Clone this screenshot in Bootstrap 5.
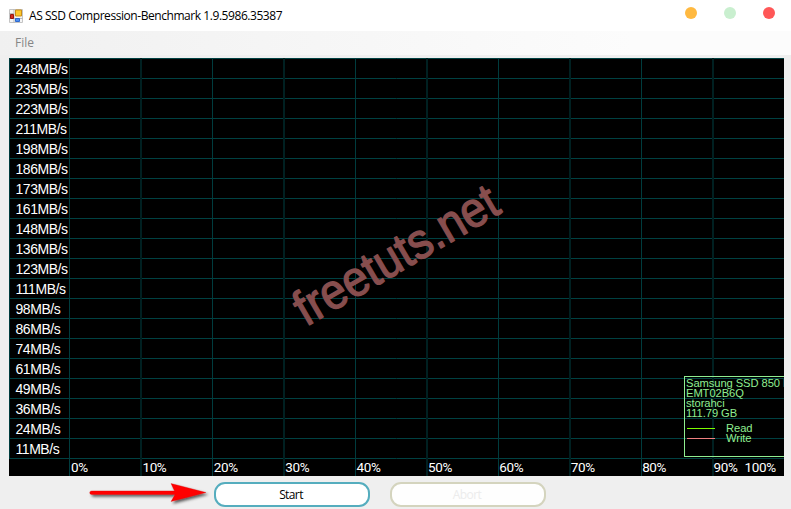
<!DOCTYPE html>
<html lang="en">
<head>
<meta charset="utf-8">
<title>AS SSD Compression-Benchmark</title>
<link rel="stylesheet" href="https://cdn.jsdelivr.net/npm/bootstrap@5.3.0/dist/css/bootstrap.min.css">
<style>
body{width:791px;height:509px;background:#efefef;font-family:"Open Sans","Noto Sans",sans-serif;font-size:12px;line-height:16px;color:#000}
.titlebar{height:31px;padding:0 16px 0 9px}
.titletext{margin-left:6px;letter-spacing:-.44px}
.dots{gap:27px;margin-top:-5px}
.dot{width:12px;height:12px}
.dot-min{background:#ffb940}.dot-max{background:#c9efcf}.dot-close{background:#ff5757}
.menubar{height:24px;background:linear-gradient(90deg,#f0f0f0,#fcfcfc 80%);color:#868686;padding-left:15px}
.plot{width:775px;height:418px;margin:3px 0 0 9px;background:#000}
.gridlines{inset:0}
.ylabels{padding:1px 0 0 6.5px;font:14px/20px "Liberation Sans",sans-serif;letter-spacing:-.45px;color:#fff;height:400px}
.xlabels{height:18px;padding-left:62px;font:400 13.5px/18px Roboto,sans-serif;letter-spacing:-.35px;color:#fff;padding-top:0}
.xlabels span{width:71.4px;flex:none}
.xlabels span.tight{width:31px}
.legend{left:675px;top:318px;width:100px;height:81px;border:1px solid #90ee90;border-right:0;color:#90ee90;font:11.2px/10px "Liberation Sans",sans-serif;letter-spacing:-.08px;padding:1px 0 0 1px;white-space:nowrap}
.legend .keys{margin-top:5px}
.swatch{width:28px;height:1px;margin:0 11px 0 1px}
.sw-read{background:#7cfc00}.sw-write{background:#f08080}
.actions{height:33px;padding:6px 0 0 214px;gap:20px}
.pill{width:156px;height:25px;border:2px solid #55adbe;border-radius:11px;background:#fff;font-size:12px;line-height:16px;padding:1px 0 0;color:#000;letter-spacing:-.6px;padding-right:2px}
.pill:disabled{border-color:#d4d4be;background:#fefefe;color:#ececec;opacity:1}
.arrow{left:84px;top:480px}
</style>
<script src="https://cdn.jsdelivr.net/npm/bootstrap@5.3.0/dist/js/bootstrap.bundle.min.js"></script>
</head>
<body class="overflow-hidden position-relative">
<header class="titlebar bg-white d-flex align-items-center">
<svg width="14" height="14" viewBox="0 0 14 14"><path d="M.5.5h13v13H.5z" fill="#f4f4f4" stroke="#c4c4c4"/><path d="M5 0v14M0 4.500h5M0 9.500h14" stroke="#bbb"/><path d="M6.500 1h6v6h-6z" fill="#fcc82c" stroke="#c98d17"/><path d="M1.500 5.500h3v4h-3z" fill="#d32b20" stroke="#97170f"/><path d="M6.500 9.500h4v3h-4z" fill="#4c8ff0" stroke="#2d68cf"/></svg>
<span class="titletext">AS SSD Compression-Benchmark 1.9.5986.35387</span>
<div class="dots d-flex ms-auto"><span class="dot dot-min rounded-circle"></span><span class="dot dot-max rounded-circle"></span><span class="dot dot-close rounded-circle"></span></div>
</header>
<nav class="menubar d-flex align-items-center">File</nav>
<main class="plot position-relative overflow-hidden">
<svg class="gridlines position-absolute" width="775" height="418">
<defs><pattern id="rows" width="775" height="20" patternUnits="userSpaceOnUse"><path d="M0 .5h775" stroke="#004142"/></pattern></defs>
<path fill="url(#rows)" d="M0 0h775v401H0z"/>
<path d="M.5 0v401M60.500 0v418M203.500 0v418M346.500 0v418M489.500 0v418M632.500 0v418" stroke="#003c3e"/>
<path d="M132 0v418M275 0v418M418 0v418M561 0v418M704 0v418" stroke="#002021" stroke-width="2"/>
<text transform="translate(297 269) rotate(-30.300)" textLength="228" lengthAdjust="spacingAndGlyphs" font-family="Liberation Sans" font-size="50" fill="#874e4e" stroke="#874e4e" stroke-width="1.300" stroke-linejoin="round">freetuts.net</text>
</svg>
<div class="ylabels position-relative d-flex flex-column">
<span>248MB/s</span><span>235MB/s</span><span>223MB/s</span><span>211MB/s</span><span>198MB/s</span><span>186MB/s</span><span>173MB/s</span><span>161MB/s</span><span>148MB/s</span><span>136MB/s</span><span>123MB/s</span><span>111MB/s</span><span>98MB/s</span><span>86MB/s</span><span>74MB/s</span><span>61MB/s</span><span>49MB/s</span><span>36MB/s</span><span>24MB/s</span><span>11MB/s</span>
</div>
<div class="xlabels position-relative d-flex"><span>0%</span><span>10%</span><span>20%</span><span>30%</span><span>40%</span><span>50%</span><span>60%</span><span>70%</span><span>80%</span><span class="tight">90%</span><span>100%</span></div>
<aside class="legend position-absolute">
<div>Samsung SSD 850 E</div><div>EMT02B6Q</div><div>storahci</div><div>111.79 GB</div>
<div class="keys"><div class="d-flex align-items-center"><span class="swatch sw-read"></span>Read</div><div class="d-flex align-items-center"><span class="swatch sw-write"></span>Write</div></div>
</aside>
</main>
<footer class="actions d-flex"><button class="pill">Start</button><button class="pill" disabled>Abort</button></footer>
<svg class="arrow position-absolute" width="130" height="29"><defs><filter id="shade" x="-10%" y="-30%" width="120%" height="170%"><feDropShadow dx="2" dy="2" stdDeviation="1.500" flood-color="#000" flood-opacity=".65"/></filter></defs><path filter="url(#shade)" d="M7.500 10.900H90.500L87 3.500l35 9L87 21.500l4-7H7.500a1.800 1.800 0 0 1 0-3.600z" fill="red" stroke="#d40000" stroke-width=".3"/></svg>
</body>
</html>
